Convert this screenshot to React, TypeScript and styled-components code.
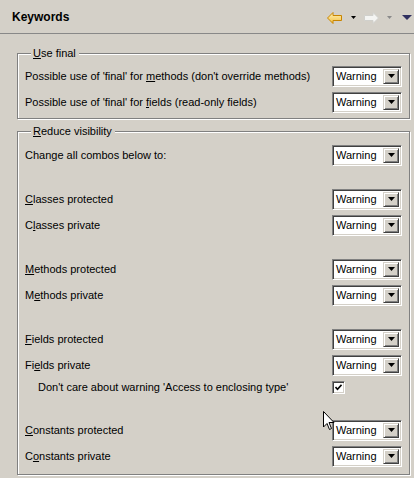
import styled, { createGlobalStyle } from "styled-components";

const GlobalStyle = createGlobalStyle`
  html, body {
    margin: 0;
    padding: 0;
    background: #d4d0c8;
  }
  body {
    font-family: "Liberation Sans", Arial, sans-serif;
    font-size: 11px;
    color: #000000;
  }
`;

type Row =
  | { kind: "combo"; label: string; mnemonic: number }
  | { kind: "check"; label: string }
  | { kind: "gap"; size: number };

const useFinalRows: Row[] = [
  { kind: "combo", label: "Possible use of 'final' for methods (don't override methods)", mnemonic: 28 },
  { kind: "combo", label: "Possible use of 'final' for fields (read-only fields)", mnemonic: 28 },
];

const visibilityRows: Row[] = [
  { kind: "combo", label: "Change all combos below to:", mnemonic: -1 },
  { kind: "gap", size: 18 },
  { kind: "combo", label: "Classes protected", mnemonic: 0 },
  { kind: "combo", label: "Classes private", mnemonic: 1 },
  { kind: "gap", size: 18 },
  { kind: "combo", label: "Methods protected", mnemonic: 0 },
  { kind: "combo", label: "Methods private", mnemonic: 1 },
  { kind: "gap", size: 18 },
  { kind: "combo", label: "Fields protected", mnemonic: 0 },
  { kind: "combo", label: "Fields private", mnemonic: 2 },
  { kind: "check", label: "Don't care about warning 'Access to enclosing type'" },
  { kind: "gap", size: 21 },
  { kind: "combo", label: "Constants protected", mnemonic: 0 },
  { kind: "combo", label: "Constants private", mnemonic: 1 },
];

function Mnemonic({ text, index }: { text: string; index: number }) {
  if (index < 0) return <>{text}</>;
  return (
    <>
      {text.slice(0, index)}
      <u>{text[index]}</u>
      {text.slice(index + 1)}
    </>
  );
}

function Combo() {
  return (
    <ComboBox>
      <ComboText>Warning</ComboText>
      <ComboButton>
        <svg width="7" height="4" viewBox="0 0 7 4">
          <polygon points="0,0 7,0 3.5,4" fill="#000" />
        </svg>
      </ComboButton>
    </ComboBox>
  );
}

function Rows({ rows }: { rows: Row[] }) {
  return (
    <>
      {rows.map((row, i) => {
        if (row.kind === "gap") return <Spacer key={i} size={row.size} />;
        if (row.kind === "check")
          return (
            <CheckRow key={i}>
              <span>{row.label}</span>
              <CheckBox>
                <svg width="7" height="7" viewBox="0 0 7 7">
                  <polyline points="0.5,3 2.5,5.2 6.5,0.8" fill="none" stroke="#000" strokeWidth="1.6" />
                </svg>
              </CheckBox>
            </CheckRow>
          );
        return (
          <ComboRow key={i}>
            <span>
              <Mnemonic text={row.label} index={row.mnemonic} />
            </span>
            <Combo />
          </ComboRow>
        );
      })}
    </>
  );
}

function SmallArrow({ color, gap }: { color: string; gap: number }) {
  return (
    <svg width="5" height="3" viewBox="0 0 5 3" style={{ marginLeft: gap }}>
      <polygon points="0,0 5,0 2.5,3" fill={color} />
    </svg>
  );
}

export default function App() {
  return (
    <>
      <GlobalStyle />
      <Page>
        <Header>
          <Title>Keywords</Title>
          <Toolbar>
            <svg width="15" height="12" viewBox="0 0 15 12">
              <defs>
                <linearGradient id="bk" x1="0" y1="0" x2="0" y2="1">
                  <stop offset="0" stopColor="#fff2b8" />
                  <stop offset="1" stopColor="#f4c040" />
                </linearGradient>
              </defs>
              <polygon
                points="0.5,6 6,0.5 6,3.5 14.5,3.5 14.5,8.5 6,8.5 6,11.5"
                fill="url(#bk)"
                stroke="#c88400"
                strokeWidth="1"
              />
            </svg>
            <SmallArrow color="#000" gap={9} />
            <svg width="15" height="12" viewBox="0 0 15 12" style={{ marginLeft: 8 }}>
              <polygon
                points="14.5,6 9,0.5 9,3.5 0.5,3.5 0.5,8.5 9,8.5 9,11.5"
                fill="#f4f4f2"
                stroke="#d0d0cc"
                strokeWidth="1"
              />
            </svg>
            <SmallArrow color="#8a8a8a" gap={8} />
            <svg width="10" height="5" viewBox="0 0 10 5" style={{ marginLeft: 10 }}>
              <polygon points="0,0 10,0 5,5" fill="#303060" />
            </svg>
          </Toolbar>
        </Header>
        <Content>
          <Group top={3} bottom={3}>
            <Legend>
              <Mnemonic text="Use final" index={0} />
            </Legend>
            <Rows rows={useFinalRows} />
          </Group>
          <Group top={4} bottom={5}>
            <Legend>
              <Mnemonic text="Reduce visibility" index={0} />
            </Legend>
            <Rows rows={visibilityRows} />
          </Group>
        </Content>
        <Cursor width="12" height="19" viewBox="0 0 12 19">
          <polygon
            points="0.5,0.5 0.5,16 4,12.5 6.5,18.5 8.5,17.5 6,11.5 11,11.5"
            fill="#fff"
            stroke="#000"
            strokeWidth="1"
          />
        </Cursor>
      </Page>
    </>
  );
}

const Page = styled.div`
  position: relative;
  width: 414px;
  height: 478px;
  overflow: hidden;
  background: #d4d0c8;
`;

const Header = styled.div`
  height: 33px;
  display: flex;
  align-items: center;
  justify-content: space-between;
  padding: 0 2px 0 12px;
  border-bottom: 1px solid #888888;
`;

const Title = styled.div`
  font-weight: bold;
  font-size: 12px;
`;

const Toolbar = styled.div`
  display: flex;
  align-items: center;
  padding-top: 2px;
`;

const Content = styled.div`
  padding: 13px 4px 0 17px;
  display: flex;
  flex-direction: column;
  gap: 6px;
`;

const Group = styled.fieldset<{ top: number; bottom: number }>`
  margin: 0;
  min-width: 0;
  border: 1px solid #808080;
  box-shadow: inset 1px 1px 0 #ffffff, 1px 1px 0 #ffffff;
  padding: ${(p) => p.top}px 7px ${(p) => p.bottom}px 7px;
  display: flex;
  flex-direction: column;
`;

const Legend = styled.legend`
  margin-left: 6px;
  padding: 0 3px 0 2px;
  background: #d4d0c8;
  line-height: 13px;
`;

const ComboRow = styled.div`
  height: 26px;
  display: flex;
  align-items: center;
  justify-content: space-between;
`;

const Spacer = styled.div<{ size: number }>`
  height: ${(p) => p.size}px;
`;

const ComboBox = styled.div`
  width: 70px;
  height: 21px;
  box-sizing: border-box;
  display: flex;
  align-items: stretch;
  background: #ffffff;
  border-top: 1px solid #808080;
  border-left: 1px solid #808080;
  border-right: 1px solid #ffffff;
  border-bottom: 1px solid #ffffff;
  box-shadow: inset 1px 1px 0 #404040, inset -1px -1px 0 #d4d0c8;
  padding: 2px;
`;

const ComboText = styled.span`
  flex: 1;
  padding-left: 1px;
  display: flex;
  align-items: center;
`;

const ComboButton = styled.div`
  width: 16px;
  box-sizing: border-box;
  background: #d4d0c8;
  border-top: 1px solid #d4d0c8;
  border-left: 1px solid #d4d0c8;
  border-right: 1px solid #404040;
  border-bottom: 1px solid #404040;
  box-shadow: inset 1px 1px 0 #ffffff, inset -1px -1px 0 #808080;
  display: flex;
  align-items: center;
  justify-content: center;
`;

const CheckRow = styled.div`
  height: 18px;
  display: flex;
  align-items: center;
  justify-content: space-between;
  padding-left: 13px;
`;

const CheckBox = styled.div`
  width: 13px;
  height: 13px;
  box-sizing: border-box;
  margin-right: 57px;
  background: #ffffff;
  border-top: 1px solid #808080;
  border-left: 1px solid #808080;
  border-right: 1px solid #ffffff;
  border-bottom: 1px solid #ffffff;
  box-shadow: inset 1px 1px 0 #404040, inset -1px -1px 0 #d4d0c8;
  display: flex;
  align-items: center;
  justify-content: center;
`;

const Cursor = styled.svg`
  position: absolute;
  left: 323px;
  top: 411px;
`;
